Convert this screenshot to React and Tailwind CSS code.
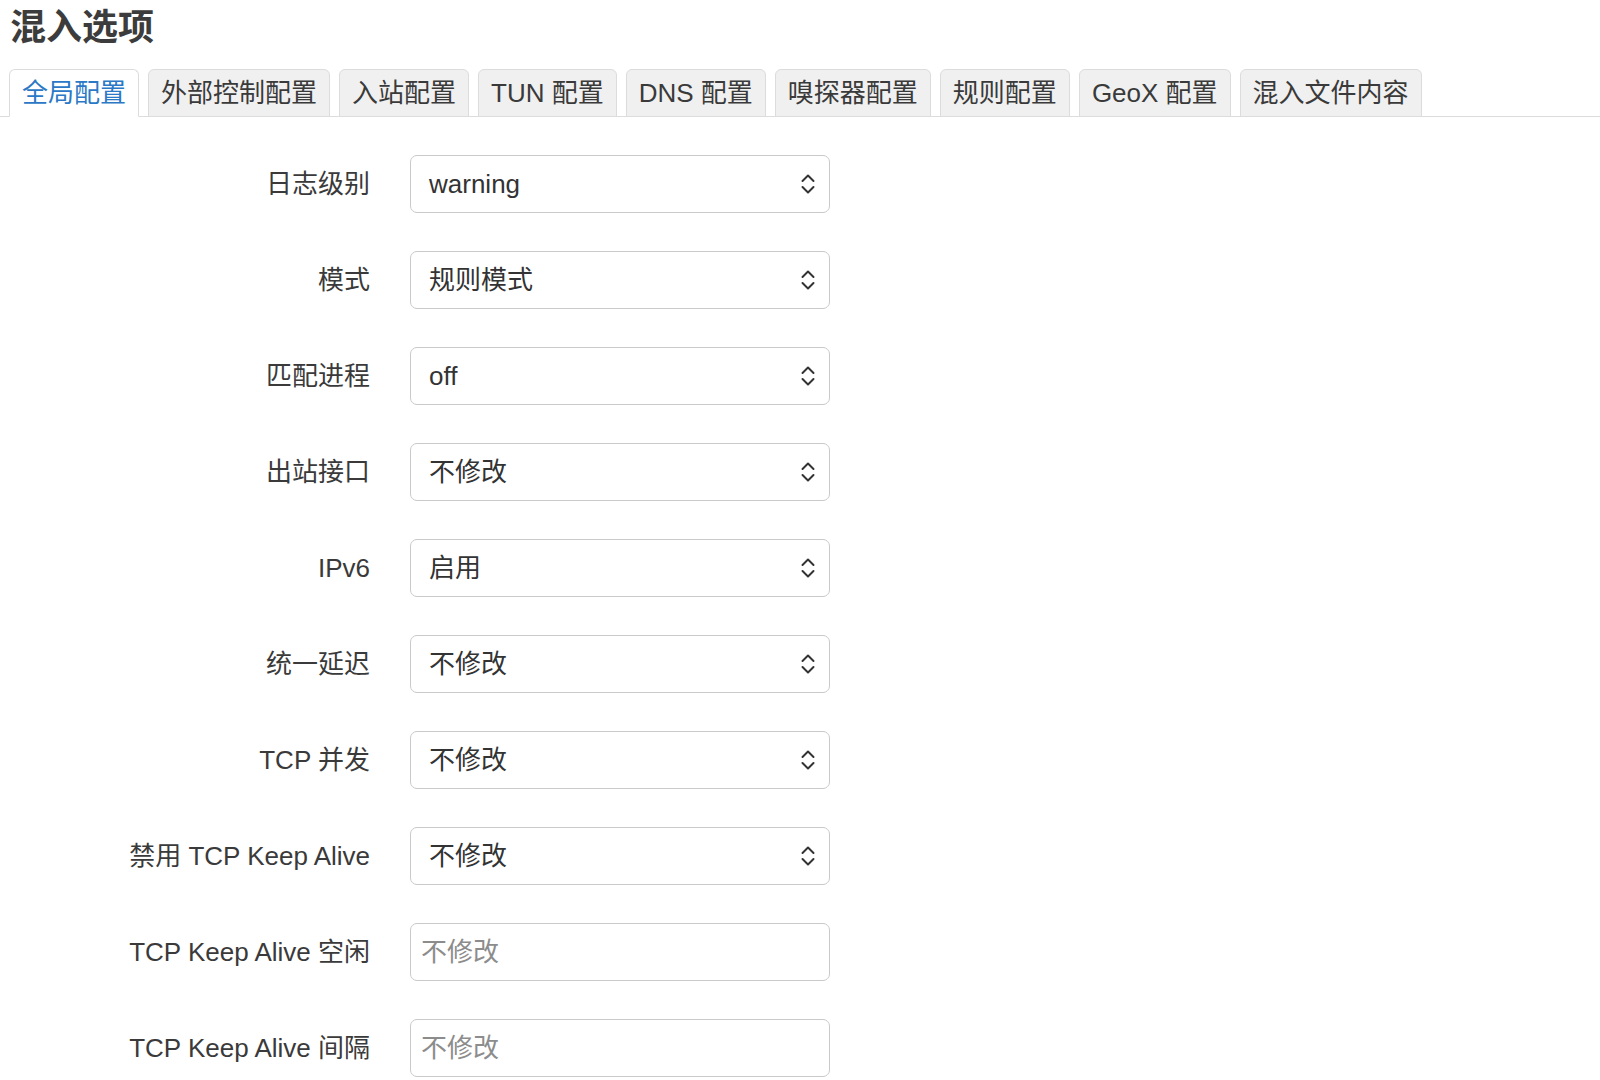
import React from "react";

const tabs = [
  "全局配置",
  "外部控制配置",
  "入站配置",
  "TUN 配置",
  "DNS 配置",
  "嗅探器配置",
  "规则配置",
  "GeoX 配置",
  "混入文件内容",
];

const fields = [
  { label: "日志级别", type: "select", value: "warning" },
  { label: "模式", type: "select", value: "规则模式" },
  { label: "匹配进程", type: "select", value: "off" },
  { label: "出站接口", type: "select", value: "不修改" },
  { label: "IPv6", type: "select", value: "启用" },
  { label: "统一延迟", type: "select", value: "不修改" },
  { label: "TCP 并发", type: "select", value: "不修改" },
  { label: "禁用 TCP Keep Alive", type: "select", value: "不修改" },
  { label: "TCP Keep Alive 空闲", type: "input", value: "不修改" },
  { label: "TCP Keep Alive 间隔", type: "input", value: "不修改" },
];

function UpDown() {
  return (
    <svg width="14" height="22" viewBox="0 0 14 22" fill="none" stroke="#333" strokeWidth="2" strokeLinecap="round" strokeLinejoin="round">
      <path d="M1.5 8 L7 2.5 L12.5 8" />
      <path d="M1.5 14 L7 19.5 L12.5 14" />
    </svg>
  );
}

function Field({ field }) {
  return (
    <div className="flex items-center h-[58px]">
      <div className="w-[370px] text-right text-[26px] leading-none text-[#3a3a3a] whitespace-nowrap">
        {field.label}
      </div>
      {field.type === "select" ? (
        <div className="ml-[40px] w-[420px] h-[58px] border border-[#cacaca] rounded-[7px] bg-white flex items-center pl-[18px] pr-[14px]">
          <span className="flex-1 text-[26px] leading-none text-[#333]">{field.value}</span>
          <UpDown />
        </div>
      ) : (
        <input
          className="ml-[40px] w-[420px] h-[58px] border border-[#cacaca] rounded-[7px] bg-white pl-[10px] text-[26px] text-[#333] placeholder:text-[#8c8c8c] outline-none"
          placeholder={field.value}
        />
      )}
    </div>
  );
}

export default function App() {
  return (
    <div
      className="w-[1600px] h-[1080px] bg-white overflow-hidden"
      style={{ fontFamily: '"Liberation Sans", "Noto Sans CJK SC", sans-serif' }}
    >
      <h2 className="pt-[10px] pl-[10px] text-[36px] leading-[36px] font-bold text-[#3c3c3c]">混入选项</h2>
      <div className="mt-[23px] flex gap-[9px] pl-[9px] border-b border-[#dcdcdc]">
        {tabs.map((t, i) => (
          <div
            key={t}
            className={
              i === 0
                ? "h-[48px] px-[12px] -mb-px flex items-center border border-[#dcdcdc] border-b-white rounded-t-[6px] bg-white text-[26px] text-[#2b78c6]"
                : "h-[48px] px-[12px] -mb-px flex items-center border border-[#dcdcdc] rounded-t-[6px] bg-[#f0f0f0] text-[26px] text-[#3a3a3a]"
            }
          >
            {t}
          </div>
        ))}
      </div>
      <div className="mt-[38px] flex flex-col gap-[38px]">
        {fields.map((f) => (
          <Field key={f.label} field={f} />
        ))}
      </div>
    </div>
  );
}
